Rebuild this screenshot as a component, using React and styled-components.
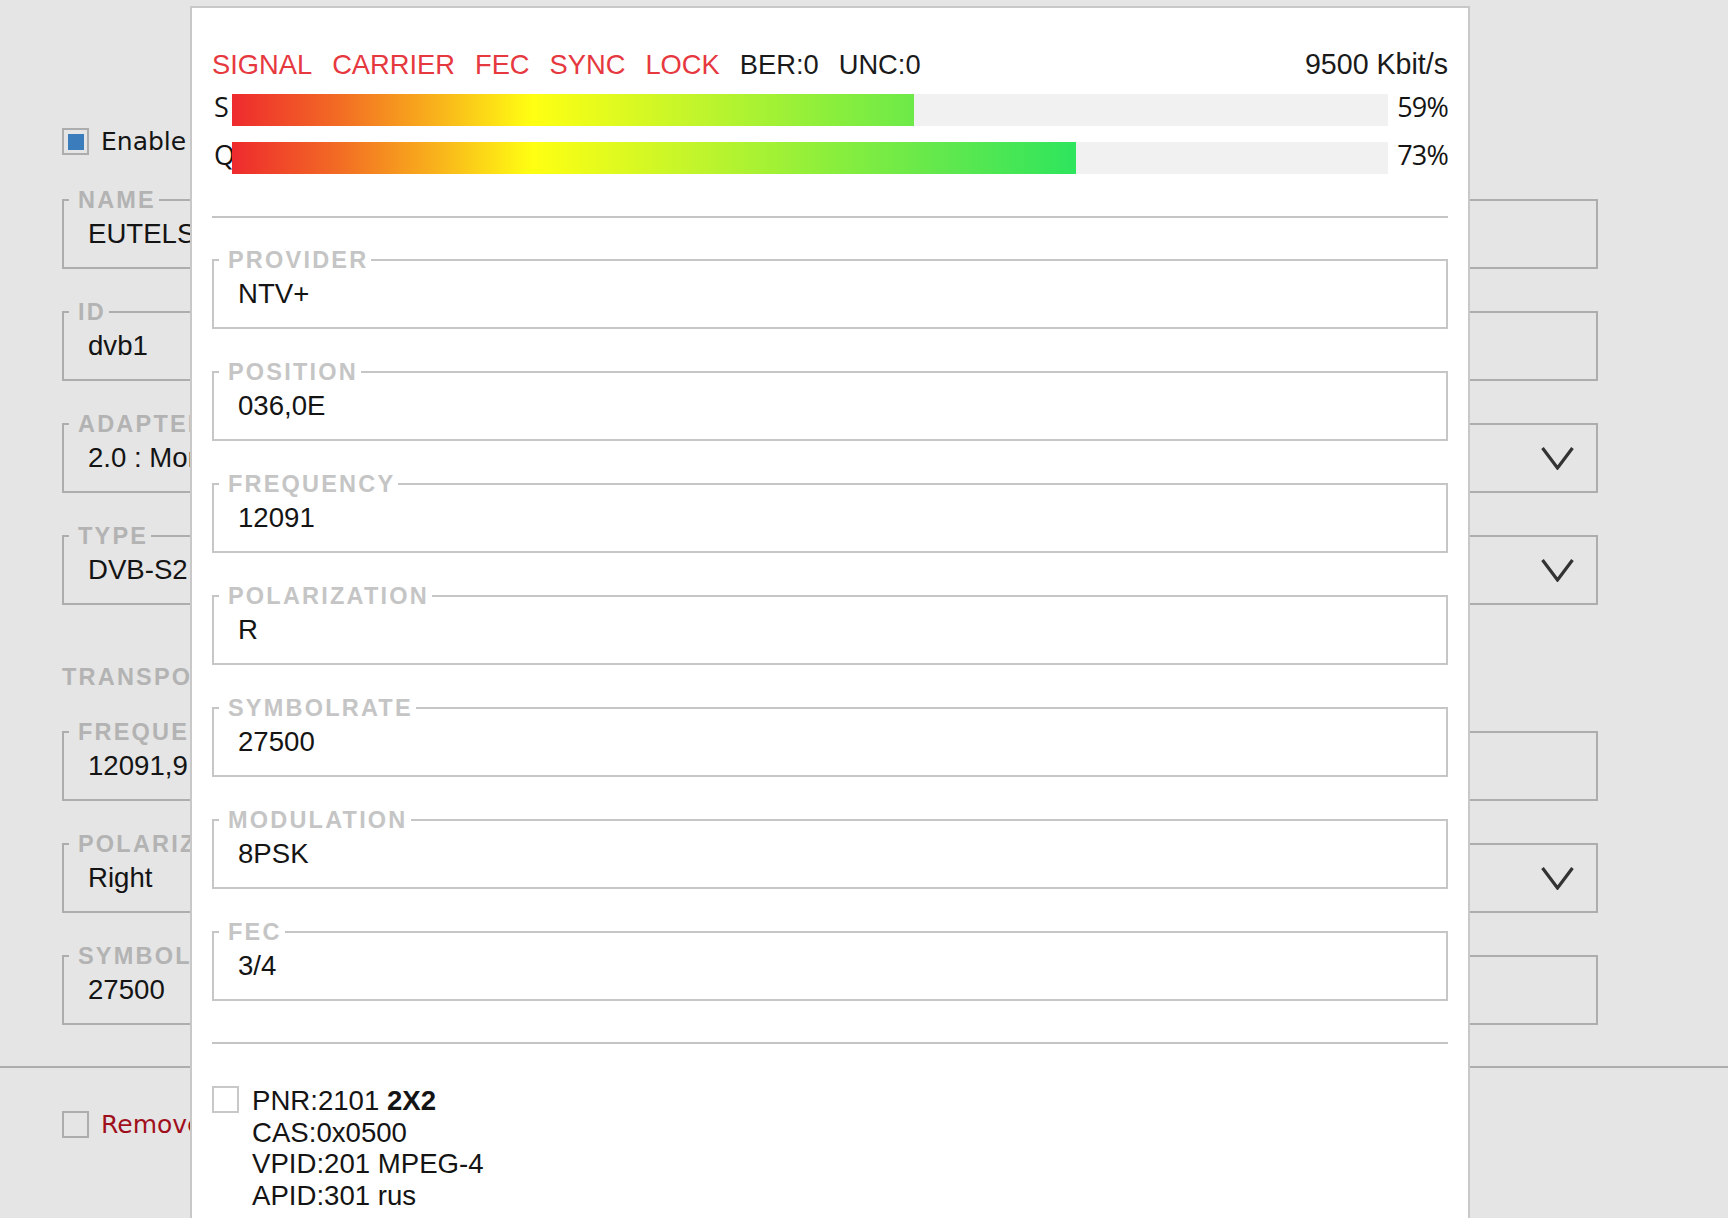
import React from 'react';
import styled, { createGlobalStyle } from 'styled-components';

const GlobalStyle = createGlobalStyle`
  html, body {
    margin: 0;
    padding: 0;
    height: 100%;
    overflow: hidden;
    background: #e5e5e5;
  }
  body {
    font-family: "Liberation Sans", Arial, Helvetica, sans-serif;
    color: #141414;
  }
  *, *::before, *::after { box-sizing: border-box; }
`;

const Page = styled.div`
  min-height: 100vh;
  display: flex;
  flex-direction: column;
`;

const Form = styled.div`
  width: 1598px;
  padding: 128px 0 41px 62px;
  display: flex;
  flex-direction: column;
`;

const CheckRow = styled.label`
  display: flex;
  align-items: center;
  gap: 12px;
  height: 27px;
  font-family: "DejaVu Sans", "Open Sans", sans-serif;
  font-size: 25px;
  line-height: 27px;
  white-space: nowrap;
  color: ${p => p.$danger ? '#a0101c' : '#141414'};
`;

const CheckBox = styled.span`
  width: 27px;
  height: 27px;
  flex: none;
  display: flex;
  align-items: center;
  justify-content: center;
  border: 2px solid ${p => p.$light ? '#c8c8c8' : '#adadad'};
  background: ${p => p.$light ? '#ffffff' : 'transparent'};
`;

const CheckMark = styled.span`
  width: 16px;
  height: 16px;
  background: #3b7cbd;
`;

const FieldStack = styled.div`
  display: flex;
  flex-direction: column;
  gap: 30px;
  margin-top: ${p => p.$top}px;
`;

const Fieldset = styled.fieldset`
  margin: 0;
  min-width: 0;
  border: 2px solid ${p => p.$modal ? '#c6c6c6' : '#adadad'};
  padding: 5px 6px 18px 5px;
`;

const Legend = styled.legend`
  padding: 0 3px 0 9px;
  font-family: "Liberation Sans", Arial, sans-serif;
  font-weight: 700;
  font-size: 23.5px;
  line-height: 26px;
  letter-spacing: 2.2px;
  color: ${p => p.$modal ? '#c5c5c5' : '#b3b3b3'};
`;

const ValueRow = styled.div`
  display: flex;
  align-items: center;
  height: 31px;
  padding-left: 19px;
`;

const Value = styled.span`
  flex: 1;
  min-width: 0;
  white-space: nowrap;
  overflow: hidden;
  font-size: 27.6px;
  line-height: 31px;
  color: #141414;
`;

const ChevronSvg = styled.svg`
  flex: none;
  width: 33px;
  height: 24px;
  margin-right: 16px;
`;

const SectionTitle = styled.div`
  margin-top: 59px;
  font-weight: 700;
  font-size: 23.5px;
  line-height: 26px;
  letter-spacing: 2.2px;
  color: #b3b3b3;
`;

const Footer = styled.div`
  border-top: 2px solid #adadad;
  padding: 43px 0 0 62px;
`;

/* ---------- modal ---------- */

const Modal = styled.div`
  position: fixed;
  top: 6px;
  left: 190px;
  width: 1280px;
  bottom: -40px;
  z-index: 10;
  background: #ffffff;
  border: 2px solid #c8c8c8;
  padding: 41px 20px 0 20px;
  display: flex;
  flex-direction: column;
`;

const StatusRow = styled.div`
  display: flex;
  gap: 20px;
  font-size: 27.3px;
  line-height: 31px;
  white-space: nowrap;
`;

const StatusItem = styled.span`
  color: ${p => p.$on ? '#e6393f' : '#1a1a1a'};
`;

const Rate = styled.span`
  margin-left: auto;
  font-size: 28.6px;
  color: #1a1a1a;
`;

const Meter = styled.div`
  margin-top: 14px;
  display: flex;
  flex-direction: column;
  gap: 16px;
`;

const BarRow = styled.div`
  display: flex;
  align-items: flex-start;
  height: 32px;
  font-family: "Open Sans", "DejaVu Sans", sans-serif;
  font-size: 27px;
  line-height: 26px;
  color: #141414;
`;

const BarLetter = styled.span`
  width: 20px;
  flex: none;
  padding-left: 2px;
`;

const Track = styled.div`
  flex: 1;
  height: 32px;
  display: flex;
  background: linear-gradient(to right,
    #ee2a2e 0%, #f26a24 9%, #f9b51b 18%, #ffff12 26%,
    #c2f52b 40%, #8aee3c 52%, #5fe84e 62%, #2ee55d 73%, #22e460 100%);
`;

const Fill = styled.div`
  flex: none;
  height: 100%;
`;

const Rest = styled.div`
  flex: 1;
  height: 100%;
  background: #f1f1f1;
`;

const Pct = styled.span`
  width: 60px;
  flex: none;
  text-align: right;
  letter-spacing: -0.8px;
`;

const Divider = styled.div`
  height: 2px;
  flex: none;
  background: #c4c4c4;
  margin-top: ${p => p.$top}px;
`;

const PnrRow = styled.div`
  margin-top: 41px;
  display: flex;
  align-items: flex-start;
  gap: 13px;
`;

const PnrBoxWrap = styled.div`
  margin-top: 1px;
`;

const PnrText = styled.div`
  font-size: 27.6px;
  line-height: 31.6px;
  color: #141414;
`;

function Chevron() {
  return (
    <ChevronSvg viewBox="0 0 33 24" aria-hidden="true">
      <polyline points="1.5,2 16.5,22 31.5,2" fill="none" stroke="#333333" strokeWidth="3.2" />
    </ChevronSvg>
  );
}

function Field({ label, value, modal, select }) {
  return (
    <Fieldset $modal={modal}>
      <Legend $modal={modal}>{label}</Legend>
      <ValueRow>
        <Value>{value}</Value>
        {select && <Chevron />}
      </ValueRow>
    </Fieldset>
  );
}

function Bar({ letter, pct }) {
  return (
    <BarRow>
      <BarLetter>{letter}</BarLetter>
      <Track>
        <Fill style={{ width: `${pct}%` }} />
        <Rest />
      </Track>
      <Pct>{pct}%</Pct>
    </BarRow>
  );
}

const general = [
  { label: 'NAME', value: 'EUTELSAT 36B' },
  { label: 'ID', value: 'dvb1' },
  { label: 'ADAPTER', value: '2.0 : Montage DS3000', select: true },
  { label: 'TYPE', value: 'DVB-S2', select: true },
];

const transponder = [
  { label: 'FREQUENCY', value: '12091,9' },
  { label: 'POLARIZATION', value: 'Right', select: true },
  { label: 'SYMBOLRATE', value: '27500' },
];

const tuned = [
  { label: 'PROVIDER', value: 'NTV+' },
  { label: 'POSITION', value: '036,0E' },
  { label: 'FREQUENCY', value: '12091' },
  { label: 'POLARIZATION', value: 'R' },
  { label: 'SYMBOLRATE', value: '27500' },
  { label: 'MODULATION', value: '8PSK' },
  { label: 'FEC', value: '3/4' },
];

const flags = ['SIGNAL', 'CARRIER', 'FEC', 'SYNC', 'LOCK'];

export default function App() {
  return (
    <>
      <GlobalStyle />
      <Page>
        <Form>
          <CheckRow>
            <CheckBox><CheckMark /></CheckBox>
            Enable
          </CheckRow>
          <FieldStack $top={32}>
            {general.map(f => <Field key={f.label} {...f} />)}
          </FieldStack>
          <SectionTitle>TRANSPONDER</SectionTitle>
          <FieldStack $top={29}>
            {transponder.map(f => <Field key={f.label} {...f} />)}
          </FieldStack>
        </Form>
        <Footer>
          <CheckRow $danger>
            <CheckBox />
            Remove
          </CheckRow>
        </Footer>
      </Page>

      <Modal>
        <StatusRow>
          {flags.map(f => <StatusItem key={f} $on>{f}</StatusItem>)}
          <StatusItem>BER:0</StatusItem>
          <StatusItem>UNC:0</StatusItem>
          <Rate>9500 Kbit/s</Rate>
        </StatusRow>
        <Meter>
          <Bar letter="S" pct={59} />
          <Bar letter="Q" pct={73} />
        </Meter>
        <Divider $top={42} />
        <FieldStack $top={29}>
          {tuned.map(f => <Field key={f.label} modal {...f} />)}
        </FieldStack>
        <Divider $top={41} />
        <PnrRow>
          <PnrBoxWrap><CheckBox $light /></PnrBoxWrap>
          <PnrText>
            <div>PNR:2101 <b>2X2</b></div>
            <div>CAS:0x0500</div>
            <div>VPID:201 MPEG-4</div>
            <div>APID:301 rus</div>
          </PnrText>
        </PnrRow>
      </Modal>
    </>
  );
}
